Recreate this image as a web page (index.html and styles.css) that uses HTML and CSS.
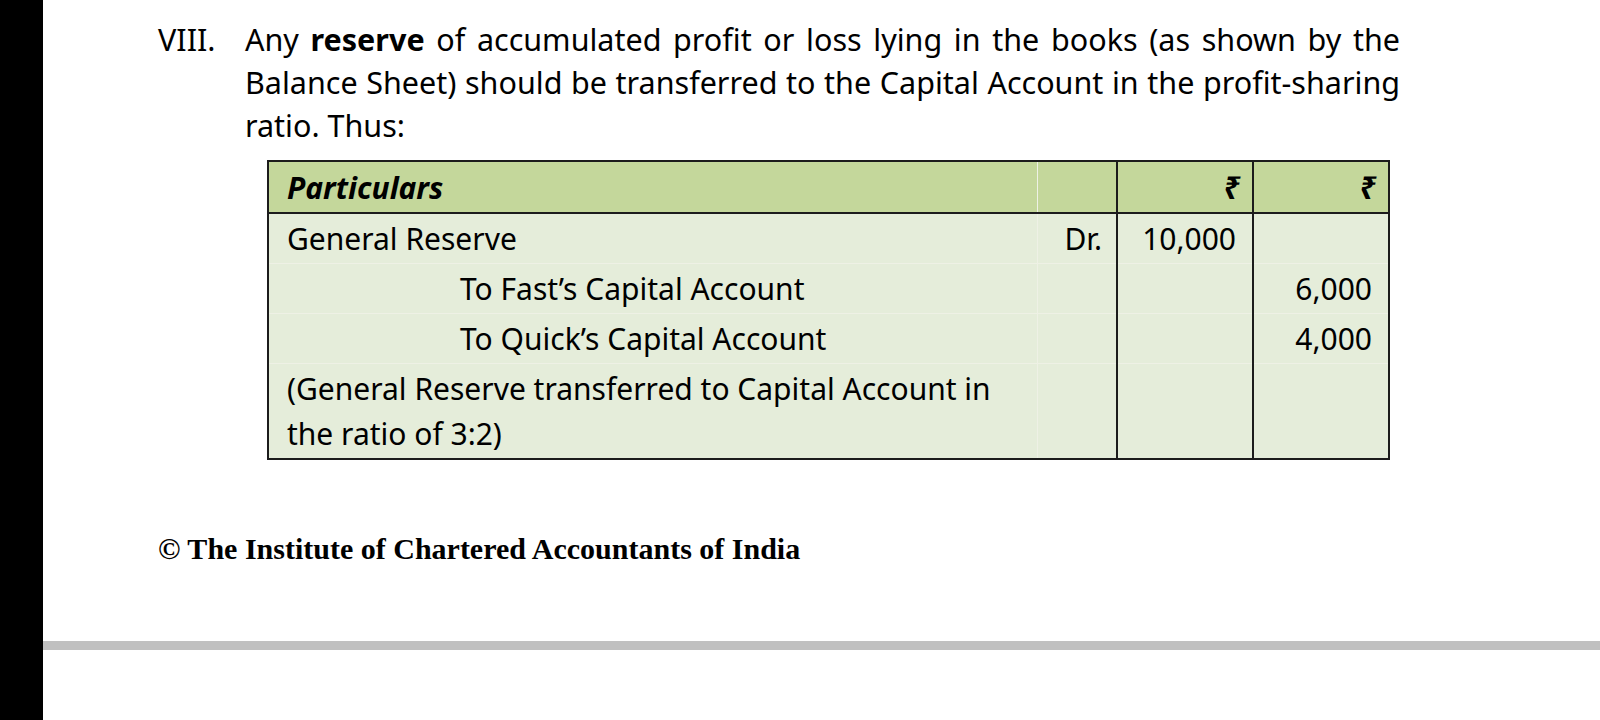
FILE: index.html
```html
<!DOCTYPE html>
<html lang="en">
<head>
<meta charset="utf-8">
<title>Reserve transfer</title>
<link rel="stylesheet" href="styles.css">
</head>
<body>
<div class="page">
  <aside class="sidebar"></aside>
  <main class="content">
    <div class="item">
      <span class="num">VIII.</span>
      <div class="item-body">
        <p class="para">Any <b>reserve</b> of accumulated profit or loss lying in the books (as shown by the Balance Sheet) should be transferred to the Capital Account in the profit-sharing ratio. Thus:</p>
        <table class="journal">
          <colgroup>
            <col class="c-part"><col class="c-dr"><col class="c-amt"><col class="c-amt">
          </colgroup>
          <thead>
            <tr>
              <th class="part">Particulars</th>
              <th class="dr"></th>
              <th class="amt">₹</th>
              <th class="amt">₹</th>
            </tr>
          </thead>
          <tbody>
            <tr>
              <td class="part">General Reserve</td>
              <td class="dr">Dr.</td>
              <td class="amt">10,000</td>
              <td class="amt"></td>
            </tr>
            <tr>
              <td class="part indent">To Fast’s Capital Account</td>
              <td class="dr"></td>
              <td class="amt"></td>
              <td class="amt">6,000</td>
            </tr>
            <tr>
              <td class="part indent">To Quick’s Capital Account</td>
              <td class="dr"></td>
              <td class="amt"></td>
              <td class="amt">4,000</td>
            </tr>
            <tr>
              <td class="part narr">(General Reserve transferred to Capital Account in the ratio of 3:2)</td>
              <td class="dr"></td>
              <td class="amt"></td>
              <td class="amt"></td>
            </tr>
          </tbody>
        </table>
      </div>
    </div>
    <footer class="copyright">© The Institute of Chartered Accountants of India</footer>
    <div class="rule"></div>
  </main>
</div>
</body>
</html>
```

FILE: styles.css
```css
* { box-sizing: border-box; }
html, body { margin: 0; padding: 0; background: #fff; }
body { font-family: "Noto Sans", "Open Sans", sans-serif; color: #000; }

.page { display: flex; min-height: 720px; }
.sidebar { width: 43px; flex: none; background: #000; }
.content { flex: 1; padding-top: 18px; }

.item { display: flex; padding-left: 115px; }
.num { width: 87px; flex: none; font-size: 30.5px; line-height: 43px; }
.item-body { width: 1155px; }
.para { margin: 0; font-size: 30.5px; line-height: 43px; text-align: justify; }
.para b { font-weight: 700; }

.journal {
  margin: 13px 0 0 22px;
  width: 1121px;
  border-collapse: collapse;
  border: 2px solid #1c1c1c;
  font-size: 30px;
  table-layout: fixed;
}
.c-part { width: 769px; }
.c-dr { width: 80px; }
.c-amt { width: 136px; }

.journal th {
  background: #c4d79b;
  height: 52px;
  font-style: italic;
  font-weight: 700;
  border-bottom: 2px solid #1c1c1c;
  padding: 0 14px 0 18px;
}
.journal td {
  background: #e5edda;
  padding: 2px 16px 2px 18px;
  line-height: 45px;
  vertical-align: top;
  border-top: 1px solid #eef1e5;
}
.journal .part { text-align: left; padding-right: 4px; }
.journal .dr { text-align: right; border-left: 1px solid #eef1e5; padding-right: 14px; }
.journal .amt { text-align: right; border-left: 2px solid #1c1c1c; padding-right: 16px; }
.journal th.amt { padding-right: 12px; }
.journal .indent { padding-left: 191px; }

.copyright {
  margin: 72px 0 0 115px;
  font-family: "Liberation Serif", serif;
  font-weight: 700;
  font-size: 30px;
  line-height: 34px;
}
.rule { height: 9px; background: #c0c0c0; margin-top: 75px; }
```
